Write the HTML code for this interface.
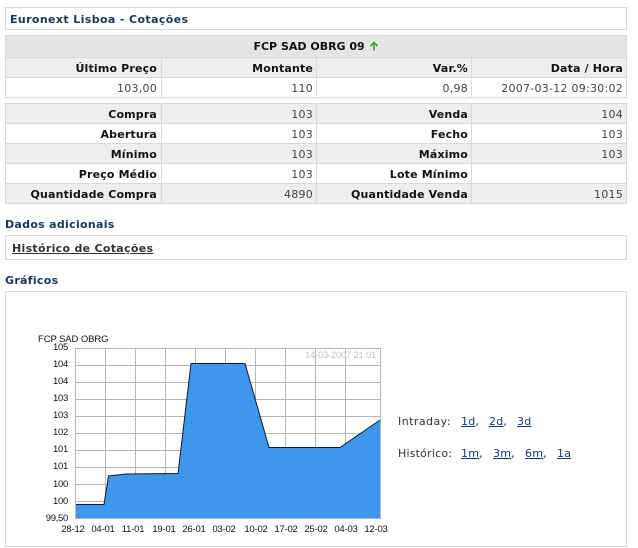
<!DOCTYPE html>
<html><head><meta charset="utf-8"><style>
html,body{margin:0;padding:0;background:#fff;width:638px;height:548px;overflow:hidden}
body{position:relative;font-family:"DejaVu Sans","Liberation Sans",sans-serif;font-size:11px;color:#333}
.box{position:absolute;box-sizing:border-box;border:1px solid #d9d9d9;background:#fff}
.h{position:absolute;font-weight:bold;color:#17375e;white-space:nowrap;font-size:11px;letter-spacing:.38px}
table{position:absolute;left:5px;width:622px;border-collapse:collapse;table-layout:fixed;font-size:11px}
td{border:1px solid #d9d9d9;padding:2px 3px 0 0;text-align:right;height:17px;line-height:17px;white-space:nowrap;overflow:hidden;color:#444;letter-spacing:.26px}
td:first-child{padding-right:4px}
td.b{font-weight:bold;color:#111;letter-spacing:.16px}
tr.g td{background:#eeeeee}
td.top{background:#e5e5e5;text-align:center;height:21px;line-height:21px;font-weight:bold;color:#111;padding:0;letter-spacing:0}
a{color:#17377a;text-decoration:underline}
.l{position:absolute;white-space:nowrap;color:#333;letter-spacing:.2px}
</style></head><body>
<div class="box" style="left:5px;top:7px;width:622px;height:23px"></div>
<div class="h" style="left:10px;top:13px">Euronext Lisboa - Cotações</div>
<table style="top:35px">
<colgroup><col style="width:156px"><col style="width:155px"><col style="width:155px"><col style="width:155px"></colgroup>
<tr><td class="top" colspan="4">FCP SAD OBRG 09 <svg width="10" height="10" viewBox="0 0 10 10" style="vertical-align:-1px"><path d="M5 9.5V1.5M1.5 5L5 1.5L8.500 5" fill="none" stroke="#3f9a2e" stroke-width="1.600"/></svg></td></tr>
<tr class="g"><td class="b">Último Preço</td><td class="b">Montante</td><td class="b">Var.%</td><td class="b">Data / Hora</td></tr>
<tr><td>103,00</td><td>110</td><td>0,98</td><td>2007-03-12 09:30:02</td></tr>
</table>
<table style="top:103px">
<colgroup><col style="width:156px"><col style="width:155px"><col style="width:155px"><col style="width:155px"></colgroup>
<tr class="g"><td class="b">Compra</td><td>103</td><td class="b">Venda</td><td>104</td></tr>
<tr><td class="b">Abertura</td><td>103</td><td class="b">Fecho</td><td>103</td></tr>
<tr class="g"><td class="b">Mínimo</td><td>103</td><td class="b">Máximo</td><td>103</td></tr>
<tr><td class="b">Preço Médio</td><td>103</td><td class="b">Lote Mínimo</td><td></td></tr>
<tr class="g"><td class="b">Quantidade Compra</td><td>4890</td><td class="b">Quantidade Venda</td><td>1015</td></tr>
</table>
<div class="h" style="left:5px;top:218px;letter-spacing:.3px">Dados adicionais</div>
<div class="box" style="left:5px;top:235px;width:622px;height:25px"></div>
<div class="l" style="left:12px;top:242px;font-weight:bold;text-decoration:underline;color:#333;letter-spacing:.3px">Histórico de Cotações</div>
<div class="h" style="left:5px;top:274px;letter-spacing:.3px">Gráficos</div>
<div class="box" style="left:5px;top:291px;width:622px;height:256px"></div>
<svg width="638" height="548" viewBox="0 0 638 548" style="position:absolute;left:0;top:0" font-family="Liberation Sans, sans-serif" font-size="9.5" fill="#111">
<g stroke="#b5b5b5" stroke-width="1" fill="none">
<path d="M75.500 348.500H380.500M75.500 365.500H380.500M75.500 382.500H380.500M75.500 399.500H380.500M75.500 416.500H380.500M75.500 433.500H380.500M75.500 450.500H380.500M75.500 467.500H380.500M75.500 484.500H380.500M75.500 501.500H380.500M75.500 518.500H380.500"/>
<path d="M75.500 348.500V518.500M105.500 348.500V518.500M135.500 348.500V518.500M165.500 348.500V518.500M195.500 348.500V518.500M225.500 348.500V518.500M255.500 348.500V518.500M285.500 348.500V518.500M315.500 348.500V518.500M345.500 348.500V518.500M380.500 348.500V518.500"/>
</g>
<path d="M76 504.500H104L108.500 476L126 474L178 473.500L191 363.500H245L269 447.500H340L380 420V518H76Z" fill="#3f97ec"/>
<path d="M76 504.500H104L108.500 476L126 474L178 473.500L191 363.500H245L269 447.500H340L380 420" fill="none" stroke="#0a1a3a" stroke-width="1"/>
<text x="305" y="358" fill="#c4c4c4" letter-spacing="-.25">14-03-2007 21:01</text>
<text x="38" y="342" letter-spacing="-.1">FCP SAD OBRG</text>
<g text-anchor="end" letter-spacing="-.3">
<text x="68" y="350">105</text><text x="68" y="367">104</text><text x="68" y="384">104</text><text x="68" y="401">103</text><text x="68" y="418">103</text><text x="68" y="435">102</text><text x="68" y="452">101</text><text x="68" y="469">101</text><text x="68" y="487">100</text><text x="68" y="504">100</text><text x="68" y="521">99,50</text>
</g>
<g text-anchor="middle" letter-spacing="-.2">
<text x="73" y="532">28-12</text><text x="103" y="532">04-01</text><text x="133" y="532">11-01</text><text x="164" y="532">19-01</text><text x="194" y="532">26-01</text><text x="224" y="532">03-02</text><text x="256" y="532">10-02</text><text x="286" y="532">17-02</text><text x="316" y="532">25-02</text><text x="346" y="532">04-03</text><text x="376" y="532">12-03</text>
</g>
</svg>
<div class="l" style="left:398px;top:415px;letter-spacing:.45px">Intraday:</div>
<div class="l" style="left:461px;top:415px"><a>1d</a>,</div>
<div class="l" style="left:489px;top:415px"><a>2d</a>,</div>
<div class="l" style="left:517px;top:415px"><a>3d</a></div>
<div class="l" style="left:398px;top:447px">Histórico:</div>
<div class="l" style="left:461px;top:447px"><a>1m</a>,</div>
<div class="l" style="left:493px;top:447px"><a>3m</a>,</div>
<div class="l" style="left:525px;top:447px"><a>6m</a>,</div>
<div class="l" style="left:557px;top:447px"><a>1a</a></div>
</body></html>
